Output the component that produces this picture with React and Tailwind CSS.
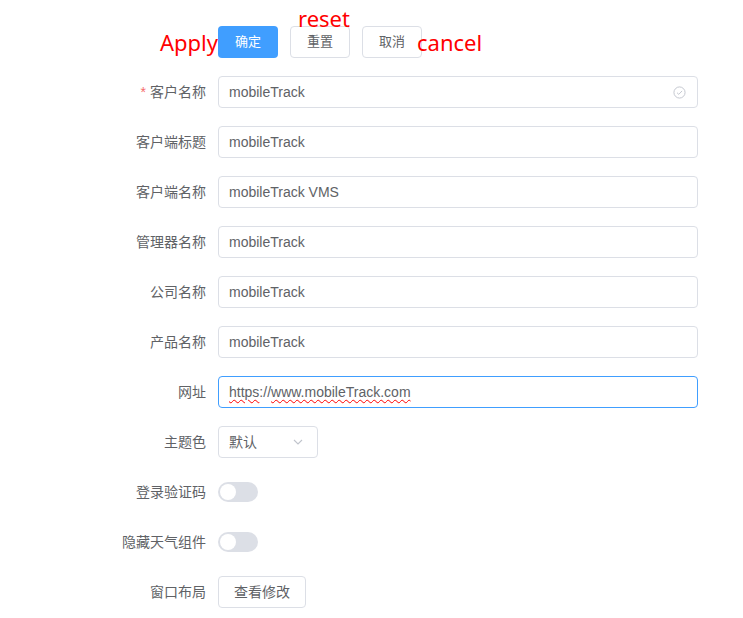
import { useState } from "react"

const font = { fontFamily: '"Liberation Sans", "Noto Sans CJK SC", sans-serif' }
const noteFont = { fontFamily: '"Noto Sans", "Noto Sans CJK SC", sans-serif' }

function Row({ label, required, children }) {
  return (
    <div className="flex items-center h-8 mb-[18px]">
      <div className="w-[120px] pr-3 text-right text-sm text-[#606266] leading-8">
        {required && <span className="text-[#f56c6c] mr-1">*</span>}
        {label}
      </div>
      <div className="flex items-center h-8">{children}</div>
    </div>
  )
}

function TextInput({ value, check }) {
  return (
    <div className="relative w-[480px] h-8 border border-[#dcdfe6] rounded bg-white flex items-center px-[10px] text-sm text-[#606266]">
      {value}
      {check && (
        <svg className="absolute right-[11px] top-[9px]" width="13" height="13" viewBox="0 0 14 14" fill="none" stroke="#c0c4cc" strokeWidth="1">
          <circle cx="7" cy="7" r="6" />
          <path d="M4.3 7.2l1.9 1.8 3.6-3.7" />
        </svg>
      )}
    </div>
  )
}

function Switch() {
  const [on, setOn] = useState(false)
  return (
    <button
      onClick={() => setOn(!on)}
      className={`relative w-10 h-5 rounded-full ${on ? "bg-[#409eff]" : "bg-[#dcdfe6]"}`}
    >
      <span className={`absolute top-[2px] w-4 h-4 rounded-full bg-white ${on ? "left-[22px]" : "left-[2px]"}`} />
    </button>
  )
}

export default function App() {
  const fields = [
    ["客户名称", "mobileTrack", true],
    ["客户端标题", "mobileTrack"],
    ["客户端名称", "mobileTrack VMS"],
    ["管理器名称", "mobileTrack"],
    ["公司名称", "mobileTrack"],
    ["产品名称", "mobileTrack"],
  ]

  return (
    <div className="relative w-[743px] h-[618px] bg-white pl-[98px] pt-[26px]" style={font}>
      {/* annotations */}
      <span className="absolute left-[160px] top-[29px] text-[22px] leading-[26px] text-[#ff0000]" style={noteFont}>Apply</span>
      <span className="absolute left-[298px] top-[8px] text-[22px] leading-[20px] text-[#ff0000]" style={noteFont}>reset</span>
      <span className="absolute left-[417px] top-[29px] text-[22px] leading-[26px] text-[#ff0000]" style={noteFont}>cancel</span>

      <Row label="">
        <button className="w-[60px] h-8 rounded bg-[#409eff] text-white text-[13px]">确定</button>
        <button className="ml-3 w-[60px] h-8 rounded border border-[#dcdfe6] bg-white text-[#606266] text-[13px]">重置</button>
        <button className="ml-3 w-[60px] h-8 rounded border border-[#dcdfe6] bg-white text-[#606266] text-[13px]">取消</button>
      </Row>

      {fields.map(([label, value, req]) => (
        <Row key={label} label={label} required={req}>
          <TextInput value={value} check={req} />
        </Row>
      ))}

      <Row label="网址">
        <div className="w-[480px] h-8 border border-[#409eff] rounded bg-white flex items-center px-[10px] text-sm text-[#606266]">
          <span className="underline decoration-wavy decoration-[#ff0000] decoration-1 underline-offset-2">https</span>
          <span>://</span>
          <span className="underline decoration-wavy decoration-[#ff0000] decoration-1 underline-offset-2">www.mobileTrack.com</span>
        </div>
      </Row>

      <Row label="主题色">
        <div className="w-[100px] h-8 border border-[#dcdfe6] rounded bg-white flex items-center justify-between pl-[10px] pr-[13px] text-sm text-[#606266]">
          <span>默认</span>
          <svg width="12" height="12" viewBox="0 0 12 12" fill="none" stroke="#c0c4cc" strokeWidth="1.1">
            <path d="M2 4l4 4 4-4" />
          </svg>
        </div>
      </Row>

      <Row label="登录验证码">
        <Switch />
      </Row>

      <Row label="隐藏天气组件">
        <Switch />
      </Row>

      <Row label="窗口布局">
        <button className="w-[88px] h-8 rounded border border-[#dcdfe6] bg-white text-[#606266] text-sm">查看修改</button>
      </Row>
    </div>
  )
}
